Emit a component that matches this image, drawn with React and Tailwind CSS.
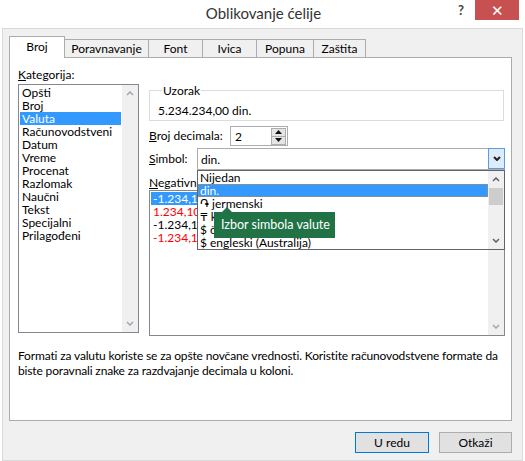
import React from 'react';

const Chevron = ({ dir = 'down', color = '#a6a6a6', bold = false }) => (
  <svg width="8" height="5" viewBox="0 0 8 5" className="block">
    <path
      d={dir === 'down' ? 'M1 1 L4 4 L7 1' : 'M1 4 L4 1 L7 4'}
      fill="none"
      stroke={color}
      strokeWidth={bold ? 2 : 1.5}
    />
  </svg>
);

const categories = [
  'Opšti', 'Broj', 'Valuta', 'Računovodstveni', 'Datum', 'Vreme',
  'Procenat', 'Razlomak', 'Naučni', 'Tekst', 'Specijalni', 'Prilagođeni',
];

const tabs = [
  { label: 'Broj', w: 'w-[56px]' },
  { label: 'Poravnavanje', w: 'w-[85px]' },
  { label: 'Font', w: 'w-[55px]' },
  { label: 'Ivica', w: 'w-[55px]' },
  { label: 'Popuna', w: 'w-[58px]' },
  { label: 'Zaštita', w: 'w-[53px]' },
];

const negatives = [
  { text: '-1.234,10 din.', cls: 'bg-[#3399ff] text-white' },
  { text: '1.234,10 din.', cls: 'text-[#ff0000]' },
  { text: '-1.234,10 din.', cls: 'text-black' },
  { text: '-1.234,10 din.', cls: 'text-[#ff0000]' },
];

const symbols = [
  'Nijedan', 'din.', '֏ jermenski', '₸ kazahstanski', '$ čileanski', '$ engleski (Australija)',
];

export default function App() {
  return (
    <div className="w-[525px] h-[461px] bg-white overflow-hidden font-['Lato','Noto_Sans',sans-serif] text-[12px] text-black">
      {/* title bar */}
      <div className="relative h-[28px]">
        <div className="text-center text-[15px] leading-[26px] text-[#333] pl-[2px]">Oblikovanje ćelije</div>
        <div className="absolute right-[6px] top-0 flex items-start">
          <span className="mt-[1px] mr-[11px] text-[13px] font-bold text-[#444]">?</span>
          <div className="w-[44px] h-[20px] bg-[#c75050] flex items-center justify-center text-white text-[15px] leading-none">✕</div>
        </div>
      </div>

      {/* dialog body */}
      <div className="ml-[2px] w-[521px] h-[433px] border border-[#dadada] bg-[#f0f0f0] pl-[6px] pt-[7px]">
        {/* tabs */}
        <div className="flex items-end h-[21px]">
          {tabs.map((t, i) =>
            i === 0 ? (
              <div
                key={t.label}
                className={`${t.w} relative z-10 h-[22px] -mb-px bg-white border border-b-0 border-[#acacac] flex items-center justify-center pb-[2px]`}
              >
                {t.label}
              </div>
            ) : (
              <div
                key={t.label}
                className={`${t.w} -ml-px h-[18px] bg-[#f0f0f0] border border-b-0 border-[#acacac] flex items-center justify-center`}
              >
                {t.label}
              </div>
            )
          )}
        </div>

        {/* panel */}
        <div className="w-[503px] h-[364px] border border-[#acacac] bg-white pl-[8px] pt-[10px]">
          <div className="flex items-start gap-[10px]">
            {/* category column */}
            <div className="w-[121px]">
              <div className="leading-[13px] mb-[3px]"><u>K</u>ategorija:</div>
              <div className="h-[249px] border border-[#828790] flex">
                <div className="flex-1 pt-[1px] px-[1px]">
                  {categories.map(c => (
                    <div
                      key={c}
                      className={`h-[13px] leading-[13px] pl-[2px] ${c === 'Valuta' ? 'bg-[#3399ff] text-white' : ''}`}
                    >
                      {c}
                    </div>
                  ))}
                </div>
                <div className="w-[16px] bg-[#f0f0f0] flex flex-col justify-between items-center pt-[6px] pb-[6px]">
                  <Chevron dir="up" />
                  <Chevron dir="down" />
                </div>
              </div>
            </div>

            {/* right column */}
            <div className="w-[356px] mt-[16px]">
              <fieldset className="w-[355px] border border-[#dcdcdc] px-[8px] pt-[7px] pb-[3px]">
                <legend className="ml-[4px] px-[1px] leading-[13px]">Uzorak</legend>
                <div className="leading-[13px]">5.234.234,00 din.</div>
              </fieldset>

              <div className="flex items-center h-[20px] mt-[5px]">
                <div className="w-[81px]"><u>B</u>roj decimala:</div>
                <div className="w-[58px] h-[20px] border border-[#abadb3] flex items-center justify-between pl-[4px] pr-[1px]">
                  <span className="leading-[13px]">2</span>
                  <div className="flex flex-col">
                    <div className="w-[15px] h-[9px] border border-[#adadad] bg-[#e5e5e5] flex items-center justify-center">
                      <svg width="7" height="4" viewBox="0 0 7 4"><path d="M0 4 L3.5 0 L7 4 Z" fill="#111" /></svg>
                    </div>
                    <div className="w-[15px] h-[9px] -mt-px border border-[#adadad] bg-[#e5e5e5] flex items-center justify-center">
                      <svg width="7" height="4" viewBox="0 0 7 4"><path d="M0 0 L3.5 4 L7 0 Z" fill="#111" /></svg>
                    </div>
                  </div>
                </div>
              </div>

              <div className="relative z-20 flex items-center h-[22px] mt-[2px]">
                <div className="w-[48px]"><u>S</u>imbol:</div>
                <div className="flex-1 h-[22px] border border-[#acacac] flex items-center justify-between pl-[3px]">
                  <span className="leading-[13px]">din.</span>
                  <div className="w-[17px] h-[21px] -mr-px -mt-px border border-[#569de5] bg-[#dcecfc] flex items-center justify-center">
                    <Chevron dir="down" color="#222" bold />
                  </div>
                </div>

                {/* open dropdown */}
                <div className="absolute left-[48px] right-0 top-full h-[80px] border border-[#646464] bg-white flex">
                  <div className="flex-1">
                    {symbols.map(s => (
                      <div
                        key={s}
                        className={`h-[13px] leading-[13px] pl-[2px] whitespace-nowrap ${s === 'din.' ? 'bg-[#3399ff] text-white outline outline-1 outline-dotted outline-[#c58a3a] -outline-offset-1' : ''}`}
                      >
                        {s}
                      </div>
                    ))}
                  </div>
                  <div className="w-[16px] bg-[#f0f0f0] flex flex-col items-center">
                    <div className="h-[17px] flex items-center"><Chevron dir="up" color="#606060" /></div>
                    <div className="w-[14px] h-[17px] bg-[#cdcdcd]" />
                    <div className="flex-1" />
                    <div className="h-[17px] flex items-center"><Chevron dir="down" color="#606060" /></div>
                  </div>

                  {/* tooltip */}
                  <div className="absolute left-[16px] top-[41px] w-[121px] h-[26px] bg-[#217346] text-white text-[12.5px] flex items-center pl-[7px] whitespace-nowrap">
                    <svg width="10" height="5" viewBox="0 0 10 5" className="absolute left-[8px] -top-[5px]">
                      <path d="M0 5 L5 0 L10 5 Z" fill="#217346" />
                    </svg>
                    Izbor simbola valute
                  </div>
                </div>
              </div>

              <div className="mt-[6px] h-[14px] leading-[14px]"><u>N</u>egativni brojevi:</div>
              <div className="h-[146px] border border-[#828790] flex">
                <div className="flex-1 pt-[1px] px-[1px]">
                  {negatives.map((n, i) => (
                    <div key={i} className={`h-[13px] leading-[13px] pl-[2px] ${n.cls}`}>{n.text}</div>
                  ))}
                </div>
                <div className="w-[16px] bg-[#f0f0f0] flex flex-col justify-end items-center pb-[6px]">
                  <Chevron dir="down" />
                </div>
              </div>
            </div>
          </div>

          <p className="mt-[12px] leading-[15px] whitespace-nowrap tracking-[-0.15px]">
            Formati za valutu koriste se za opšte novčane vrednosti. Koristite računovodstvene formate da
            <br />
            biste poravnali znake za razdvajanje decimala u koloni.
          </p>
        </div>

        {/* buttons */}
        <div className="w-[503px] mt-[11px] flex justify-end gap-[10px]">
          <button className="w-[74px] h-[21px] border border-[#0078d7] bg-[#e1e1e1] leading-none">U redu</button>
          <button className="w-[73px] h-[21px] border border-[#adadad] bg-[#e1e1e1] leading-none">Otkaži</button>
        </div>
      </div>
    </div>
  );
}
